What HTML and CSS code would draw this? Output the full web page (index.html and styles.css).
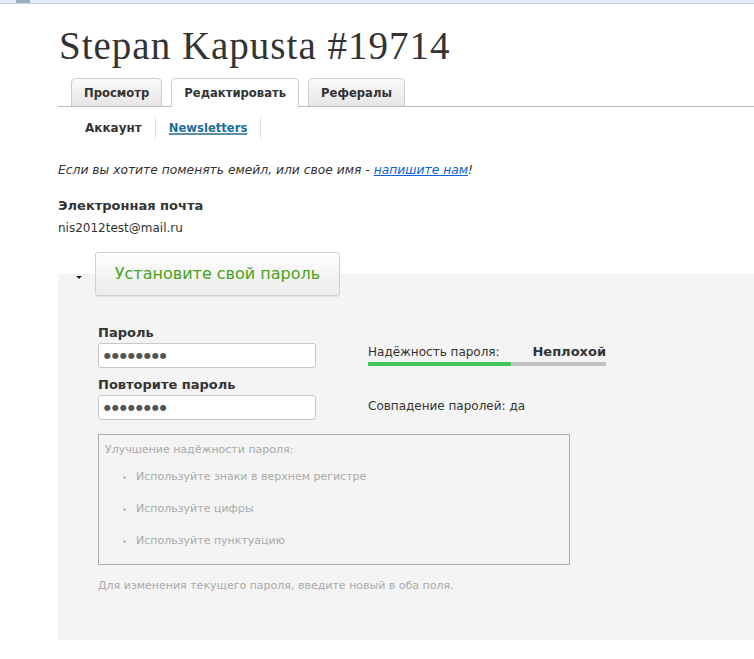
FILE: index.html
```html
<!DOCTYPE html>
<html lang="ru">
<head>
<meta charset="utf-8">
<title>Stepan Kapusta #19714</title>
<link rel="stylesheet" href="styles.css">
</head>
<body>
<div class="topbar"><span class="topbar-tab"></span></div>
<div class="page">
  <h1 class="title">Stepan Kapusta #19714</h1>
  <ul class="tabs">
    <li class="tab"><a href="#">Просмотр</a></li>
    <li class="tab active"><a href="#">Редактировать</a></li>
    <li class="tab"><a href="#">Рефералы</a></li>
  </ul>
  <ul class="subtabs">
    <li class="subtab"><a href="#" class="current">Аккаунт</a></li>
    <li class="subtab"><a href="#" class="link">Newsletters</a></li>
  </ul>
  <p class="note">Если вы хотите поменять емейл, или свое имя - <a href="#">напишите нам</a>!</p>
  <div class="email">
    <div class="email-label">Электронная почта</div>
    <div class="email-value">nis2012test@mail.ru</div>
  </div>
  <fieldset class="pwset">
    <legend class="pwlegend"><span class="arrow"></span><span class="legend-btn">Установите свой пароль</span></legend>
    <div class="pwgrid">
      <div class="pwfields">
        <label class="pwlabel">Пароль</label>
        <div class="pwinput">&#9679;&#9679;&#9679;&#9679;&#9679;&#9679;&#9679;&#9679;</div>
        <label class="pwlabel second">Повторите пароль</label>
        <div class="pwinput">&#9679;&#9679;&#9679;&#9679;&#9679;&#9679;&#9679;&#9679;</div>
      </div>
      <div class="pwinfo">
        <div class="strength">
          <div class="strength-row"><span>Надёжность пароля:</span><span class="strength-val">Неплохой</span></div>
          <div class="bar"><div class="bar-fill" style="width:60%"></div></div>
        </div>
        <div class="match">Совпадение паролей: да</div>
      </div>
    </div>
    <div class="tips">
      <div class="tips-title">Улучшение надёжности пароля:</div>
      <ul class="tips-list">
        <li>Используйте знаки в верхнем регистре</li>
        <li>Используйте цифры</li>
        <li>Используйте пунктуацию</li>
      </ul>
    </div>
    <p class="pwdesc">Для изменения текущего пароля, введите новый в оба поля.</p>
  </fieldset>
</div>
</body>
</html>
```
FILE: styles.css
```css
html, body {
  margin: 0;
  padding: 0;
  background: #fff;
}
body {
  font-family: "DejaVu Sans", Verdana, sans-serif;
  color: #333;
  font-size: 12px;
}
.topbar {
  height: 3px;
  background: #dfeaf6;
  border-bottom: 1px solid #c6d6e8;
}
.topbar-tab {
  display: block;
  width: 14px;
  height: 3px;
  margin-left: 16px;
  background: #9aaec4;
}
.page {
  padding-left: 58px;
}
.title {
  font-family: "Liberation Serif", "Times New Roman", serif;
  font-weight: normal;
  font-size: 39px;
  letter-spacing: 1px;
  line-height: 44px;
  margin: 20px 0 0 1px;
  color: #333;
}
.tabs {
  list-style: none;
  margin: 10px 0 0 0;
  padding: 0 0 0 13px;
  display: flex;
  gap: 9px;
  border-bottom: 1px solid #bbb;
  height: 28px;
}
.tab {
  height: 27px;
  border: 1px solid #ccc;
  border-bottom: none;
  border-radius: 5px 5px 0 0;
  background: linear-gradient(#fafafa, #e6e6e6);
  display: flex;
  align-items: center;
  padding: 0 12px;
}
.tab a {
  font-weight: bold;
  font-size: 11.6px;
  color: #333;
  text-decoration: none;
}
.tab.active {
  background: #fff;
  height: 28px;
}
.subtabs {
  list-style: none;
  margin: 0;
  padding: 10px 0 0 14px;
  display: flex;
  height: 22px;
}
.subtab {
  padding: 0 13px;
  border-right: 1px solid #ddd;
  display: flex;
  align-items: center;
  height: 22px;
}
.subtab a {
  font-weight: bold;
  font-size: 12px;
  color: #333;
  text-decoration: none;
}
.subtab a.link {
  font-size: 11.6px;
  color: #1c6e9c;
  text-decoration: underline;
  text-decoration-thickness: 2px;
  text-decoration-color: #5a8fb0;
}
.note {
  margin: 23px 0 0 0;
  font-style: italic;
  font-size: 12.3px;
  line-height: 16px;
  color: #333;
}
.note a {
  color: #0a62d9;
}
.email {
  margin-top: 19px;
}
.email-label {
  font-weight: bold;
  font-size: 13px;
  line-height: 18px;
}
.email-value {
  font-size: 12px;
  line-height: 18px;
  margin-top: 4px;
}
.pwset {
  margin: 15px 0 0 0;
  padding: 0 0 0 40px;
  border: none;
  background: #f4f4f4;
  min-height: 388px;
  box-sizing: border-box;
}
.pwlegend {
  padding: 0;
  margin-left: -40px;
  display: flex;
  align-items: center;
}
.arrow {
  width: 0;
  height: 0;
  border-left: 3px solid transparent;
  border-right: 3px solid transparent;
  border-top: 3px solid #222;
  margin: 6px 13px 0 18px;
}
.legend-btn {
  display: block;
  box-sizing: border-box;
  width: 245px;
  height: 44px;
  line-height: 42px;
  text-align: center;
  white-space: nowrap;
  border: 1px solid #cfcfcf;
  border-radius: 3px;
  background: linear-gradient(#fdfdfd, #ececec);
  box-shadow: 0 1px 1px rgba(0,0,0,0.08);
  color: #4aa21c;
  font-size: 16px;
}
.pwgrid {
  display: flex;
  margin-top: 28px;
}
.pwfields {
  width: 218px;
  display: flex;
  flex-direction: column;
}
.pwlabel {
  font-weight: bold;
  font-size: 13px;
  line-height: 18px;
  color: #333;
}
.pwlabel.second {
  margin-top: 8px;
}
.pwinput {
  box-sizing: border-box;
  height: 25px;
  margin-top: 1px;
  border: 1px solid #c8c8c8;
  border-radius: 3px;
  background: #fff;
  font-size: 8px;
  letter-spacing: 1px;
  line-height: 23px;
  padding-left: 5px;
  color: #555;
}
.pwinfo {
  margin-left: 52px;
  width: 238px;
  padding-top: 20px;
}
.strength-row {
  display: flex;
  justify-content: space-between;
  font-size: 12px;
  line-height: 16px;
}
.strength-val {
  font-weight: bold;
  font-size: 13px;
}
.bar {
  margin-top: 2px;
  height: 4px;
  background: #c2c2c2;
}
.bar-fill {
  height: 4px;
  background: #41c65c;
}
.match {
  margin-top: 32px;
  font-size: 12px;
  line-height: 16px;
}
.tips {
  margin-top: 14px;
  width: 472px;
  height: 131px;
  box-sizing: border-box;
  border: 1px solid #acacac;
  padding: 7px 0 0 6px;
  color: #aaa;
  font-size: 11px;
}
.tips-title {
  line-height: 16px;
}
.tips-list {
  margin: 0;
  padding: 0 0 0 31px;
}
.tips-list li {
  line-height: 16px;
  margin-top: 16px;
}
.tips-list li:first-child {
  margin-top: 11px;
}
.tips-list li::marker {
  color: #bbb;
}
.pwdesc {
  margin: 13px 0 0 0;
  color: #aaa;
  font-size: 11px;
  line-height: 16px;
}
```
